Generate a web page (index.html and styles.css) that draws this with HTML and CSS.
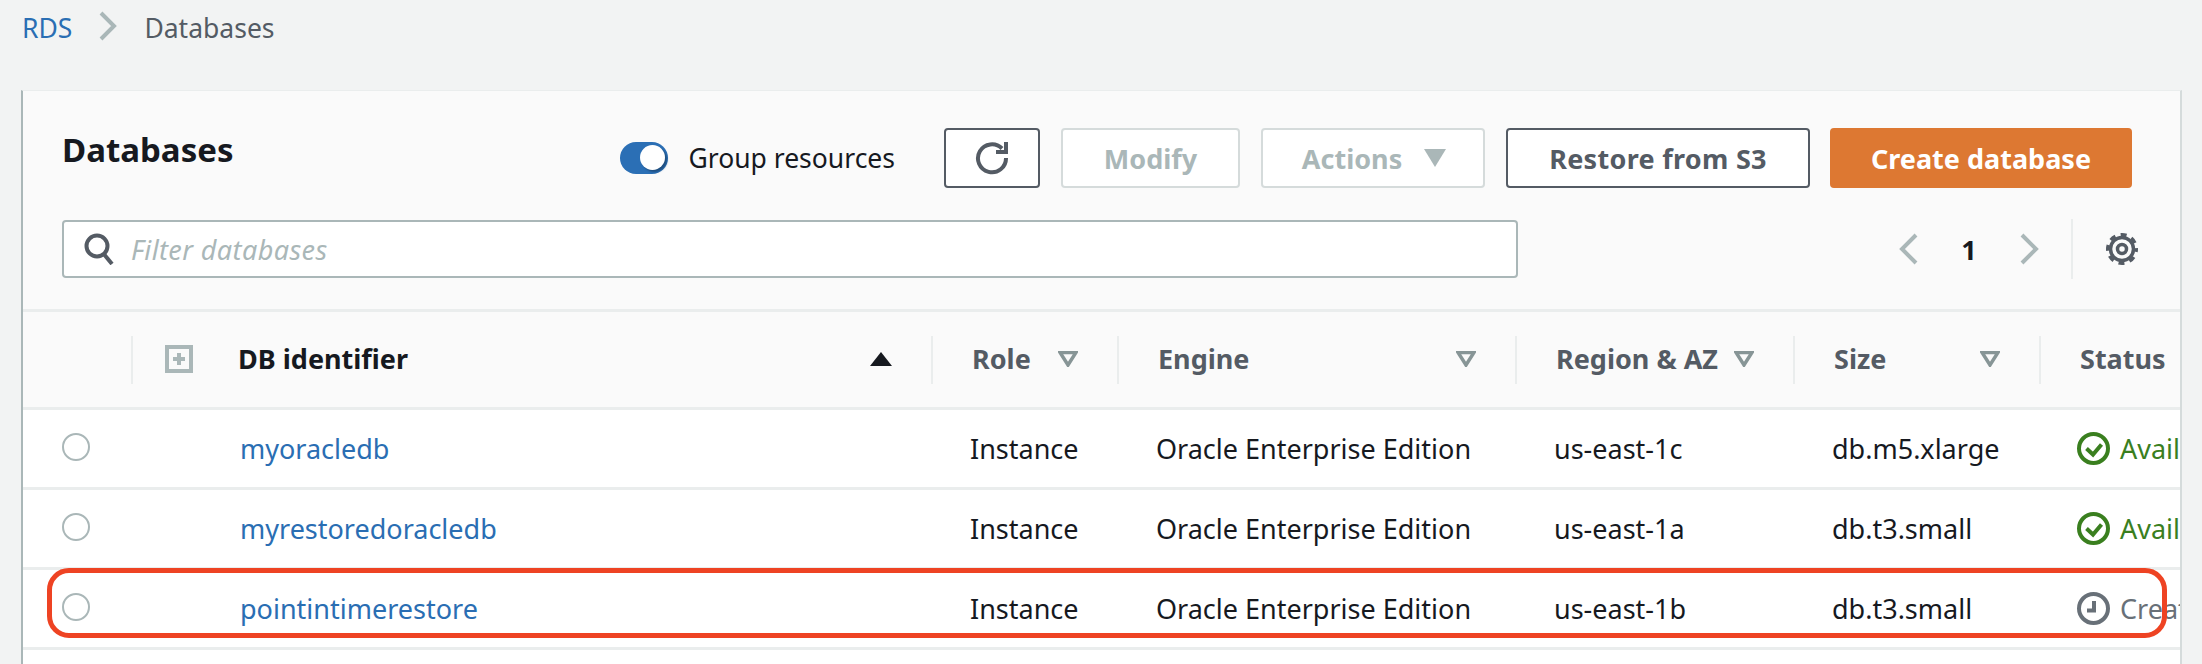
FILE: index.html
```html
<!DOCTYPE html>
<html lang="en">
<head>
<meta charset="utf-8">
<title>Databases</title>
<link rel="stylesheet" href="styles.css">
</head>
<body>
<nav class="crumbs">
  <a class="link" href="#">RDS</a>
  <svg class="crumb-sep" viewBox="0 0 20 30"><path d="M3 2l13 13L3 28"/></svg>
  <span>Databases</span>
</nav>
<main class="panel">
  <header class="head">
    <div class="bar">
      <h1>Databases</h1>
      <div class="actions">
        <label class="toggle-wrap"><span class="toggle"><span class="knob"></span></span>Group resources</label>
        <button class="btn w-refresh"><svg class="ico-refresh" viewBox="0 0 34 34"><path d="M27 7.500A14 14 0 1 0 31 17"/><path class="fill" d="M21 9h8V1h4v12H21z"/></svg></button>
        <button class="btn off w-modify">Modify</button>
        <button class="btn off w-actions">Actions<svg class="caret" viewBox="0 0 22 18"><path d="M0 0h22L11 18z"/></svg></button>
        <button class="btn w-restore">Restore from S3</button>
        <button class="btn primary w-create">Create database</button>
      </div>
    </div>
    <div class="bar filter-row">
      <div class="search">
        <svg class="ico-search" viewBox="0 0 30 32"><circle cx="13" cy="13" r="10.5"/><path d="M19 20l9 11"/></svg>
        <span class="placeholder">Filter databases</span>
      </div>
      <div class="pager">
        <svg class="chev" viewBox="0 0 20 32"><path d="M17 2L3 16l14 14"/></svg>
        <span class="page">1</span>
        <svg class="chev" viewBox="0 0 20 32"><path d="M3 2l14 14L3 30"/></svg>
      </div>
      <div class="settings">
        <svg class="ico-gear" viewBox="0 0 32 32"><circle class="teeth" cx="16" cy="16" r="14.250"/><circle cx="16" cy="16" r="11.500"/><circle cx="16" cy="16" r="4.500"/></svg>
      </div>
    </div>
  </header>
  <div class="table">
    <div class="row row-head">
      <div class="cell"></div>
      <div class="cell th first">
        <svg class="ico-expand" viewBox="0 0 28 28"><path class="box" d="M0 0h28v28H0zM4 4v20h20V4z"/><path class="plus" d="M12 8h4v4h4v4h-4v4h-4v-4H8v-4h4z"/></svg>
        <span class="th-name strong">DB identifier</span>
        <svg class="sort" viewBox="0 0 22 14"><path d="M11 0l11 14H0z"/></svg>
      </div>
      <div class="cell th"><span class="th-name">Role</span><svg class="filter" viewBox="0 0 20 16"><path d="M2 1.500h16L10 14z"/></svg></div>
      <div class="cell th"><span class="th-name">Engine</span><svg class="filter" viewBox="0 0 20 16"><path d="M2 1.500h16L10 14z"/></svg></div>
      <div class="cell th"><span class="th-name">Region &amp; AZ</span><svg class="filter" viewBox="0 0 20 16"><path d="M2 1.500h16L10 14z"/></svg></div>
      <div class="cell th"><span class="th-name">Size</span><svg class="filter" viewBox="0 0 20 16"><path d="M2 1.500h16L10 14z"/></svg></div>
      <div class="cell th"><span class="th-name">Status</span></div>
    </div>
    <div class="row">
      <div class="cell pick"><span class="radio"></span></div>
      <div class="cell name"><a class="link" href="#">myoracledb</a></div>
      <div class="cell">Instance</div>
      <div class="cell">Oracle Enterprise Edition</div>
      <div class="cell">us-east-1c</div>
      <div class="cell">db.m5.xlarge</div>
      <div class="cell status ok"><svg class="ico-status" viewBox="0 0 33 33"><circle cx="16.500" cy="16.500" r="14.500"/><path d="M9.500 16.500l6.500 6 8.500-10"/></svg>Available</div>
    </div>
    <div class="row">
      <div class="cell pick"><span class="radio"></span></div>
      <div class="cell name"><a class="link" href="#">myrestoredoracledb</a></div>
      <div class="cell">Instance</div>
      <div class="cell">Oracle Enterprise Edition</div>
      <div class="cell">us-east-1a</div>
      <div class="cell">db.t3.small</div>
      <div class="cell status ok"><svg class="ico-status" viewBox="0 0 33 33"><circle cx="16.500" cy="16.500" r="14.500"/><path d="M9.500 16.500l6.500 6 8.500-10"/></svg>Available</div>
    </div>
    <div class="row">
      <div class="cell pick"><span class="radio"></span></div>
      <div class="cell name"><a class="link" href="#">pointintimerestore</a></div>
      <div class="cell">Instance</div>
      <div class="cell">Oracle Enterprise Edition</div>
      <div class="cell">us-east-1b</div>
      <div class="cell">db.t3.small</div>
      <div class="cell status wait"><svg class="ico-status" viewBox="0 0 33 33"><circle cx="16.500" cy="16.500" r="14.500"/><path d="M17 9v9.500H10"/></svg>Creating</div>
    </div>
    <div class="row row-empty"></div>
  </div>
</main>
<div class="callout"></div>
</body>
</html>
```
FILE: styles.css
```css
* { box-sizing: border-box; }
html, body { height: 100%; }
body {
  margin: 0;
  height: 664px;
  overflow: hidden;
  background: #f2f3f3;
  color: #16191f;
  font-family: "Noto Sans", Roboto, sans-serif;
  font-size: 27px;
  position: relative;
}
svg { display: block; flex: none; fill: none; }
.link { color: #2a6eb3; text-decoration: none; }

.crumbs {
  height: 90px;
  padding: 11px 0 0 22px;
  display: flex;
  align-items: flex-start;
  gap: 26px;
  font-size: 26.500px;
  line-height: 34px;
  color: #545b64;
}
.crumb-sep { width: 20px; height: 30px; stroke: #aab7b8; stroke-width: 4; }

.panel {
  margin: 0 20px 0 21px;
  height: 574px;
  background: #fafafa;
  border-left: 2px solid #aab7b8;
  border-right: 2px solid #d5dbdb;
  border-top: 1px solid #eaeded;
  overflow: hidden;
}
.head { padding: 37px 48px 30px 39px; border-bottom: 3px solid #eaeded; }
.bar { display: flex; align-items: center; }
h1 { margin: 0 0 16px; font-size: 33px; font-weight: 700; line-height: 44px; }
.actions { margin-left: auto; display: flex; align-items: center; gap: 21px; }
.toggle-wrap { display: flex; align-items: center; gap: 20px; margin-right: 28px; font-size: 26.500px; }
.toggle { width: 48px; height: 32px; border-radius: 16px; background: #2b6fb5; position: relative; }
.knob { position: absolute; right: 3px; top: 3px; width: 25px; height: 25px; border-radius: 50%; background: #fff; box-shadow: 2px 2px 2px #1f4f80; }

.btn {
  height: 60px;
  border: 2px solid #545b64;
  border-radius: 4px;
  background: #fff;
  color: #545b64;
  font: 700 27px "Noto Sans", Roboto, sans-serif;
  display: flex;
  align-items: center;
  justify-content: center;
}
.off { border-color: #d5dbdb; color: #aab7b8; }
.primary { background: #dd7832; border-color: #dd7832; color: #fff; }
.w-refresh { width: 96px; }
.w-modify { width: 179px; }
.w-actions { width: 224px; gap: 22px; padding-left: 8px; }
.w-restore { width: 304px; letter-spacing: 0.300px; }
.w-create { width: 302px; margin-left: -1px; }
.ico-refresh { width: 34px; height: 34px; stroke: #545b64; stroke-width: 4; }
.fill { fill: #545b64; stroke: none; }
.caret { width: 22px; height: 18px; fill: #aab7b8; }

.filter-row { margin-top: 31px; }
.search {
  flex: none;
  width: 1456px;
  height: 58px;
  border: 2px solid #aab7b8;
  border-radius: 4px;
  background: #fff;
  display: flex;
  align-items: center;
  gap: 17px;
  padding-left: 20px;
}
.ico-search { width: 30px; height: 32px; stroke: #545b64; stroke-width: 4; }
.placeholder { color: #aab7b8; font-style: italic; letter-spacing: 0.400px; }
.pager { margin-left: 381px; display: flex; align-items: center; }
.chev { width: 20px; height: 32px; stroke: #aab7b8; stroke-width: 4; }
.page { width: 100px; text-align: center; font-weight: 700; }
.settings { margin-left: 32px; height: 60px; padding-left: 33px; border-left: 2px solid #eaeded; display: flex; align-items: center; }
.ico-gear { width: 32px; height: 32px; stroke: #545b64; stroke-width: 3.500; }
.teeth { stroke-dasharray: 6 5.390; stroke-dashoffset: 25.780; }

.table { width: 2400px; }
.row {
  display: grid;
  grid-template-columns: 108px 800px 186px 398px 278px 246px 362px;
  height: 80px;
  align-items: center;
  background: #fff;
  border-bottom: 3px solid #eaeded;
}
.row-head { height: 98px; background: #fafafa; }
.row-empty { border-bottom: 0; }
.cell { padding-left: 39px; white-space: nowrap; display: flex; align-items: center; }
.th { height: 48px; padding: 0 39px 2px 39px; border-left: 2px solid #eaeded; color: #545b64; font-weight: 700; justify-content: space-between; }
.th.first { padding-left: 32px; justify-content: flex-start; }
.strong { color: #16191f; margin-left: 45px; }
.ico-expand { width: 28px; height: 28px; }
.box { fill: #aab7b8; fill-rule: evenodd; }
.plus { fill: #aab7b8; }
.sort { width: 22px; height: 14px; fill: #16191f; margin-left: auto; }
.filter { width: 20px; height: 16px; stroke: #879596; stroke-width: 3.500; }
.pick { margin-top: -4px; }
.radio { width: 28px; height: 28px; border: 2px solid #aab7b8; border-radius: 50%; background: #fff; }
.name { padding-left: 109px; }
.status { gap: 10px; padding-left: 38px; }
.ok { color: #3a7f1f; }
.wait { color: #687078; }
.ico-status { width: 33px; height: 33px; stroke: currentColor; stroke-width: 4; }

.callout {
  position: absolute;
  left: 47px;
  top: 568px;
  width: 2120px;
  height: 70px;
  border: 5px solid #ee4323;
  border-radius: 22px;
}
```
